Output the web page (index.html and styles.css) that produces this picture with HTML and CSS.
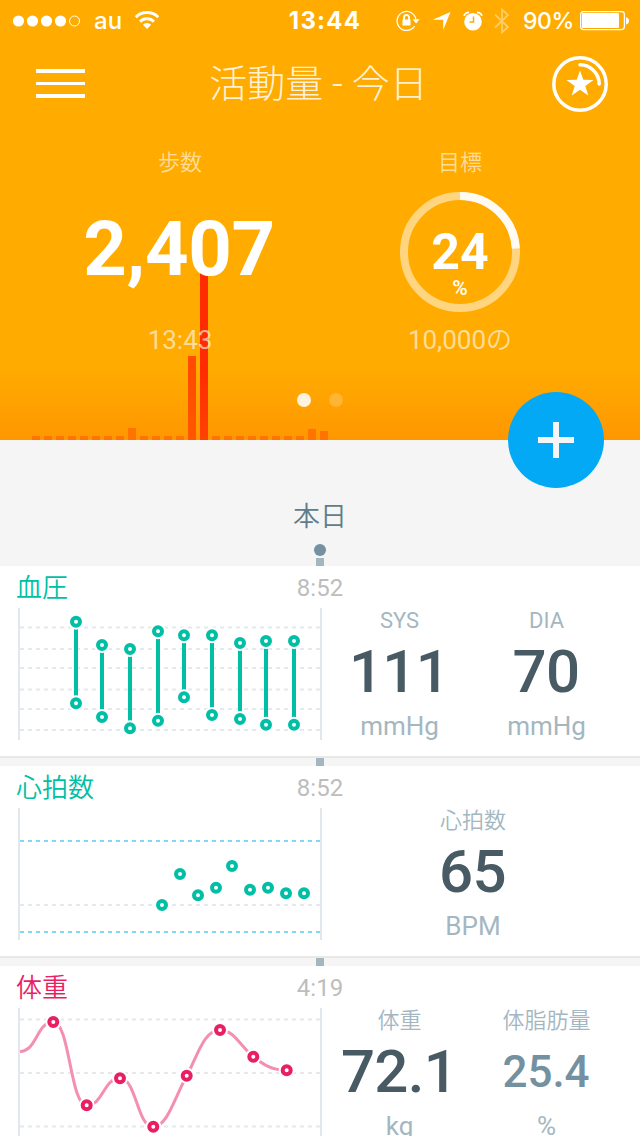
FILE: index.html
```html
<!DOCTYPE html>
<html lang="ja">
<head>
    <meta charset="UTF-8">
    <meta name="viewport" content="width=device-width, initial-scale=1.0">
    <title>活動量</title>
    <link rel="stylesheet" href="styles.css">
</head>
<body>
    <div class="hero">
        <div class="steps-chart" id="stepsChart"></div>
        <div class="hero-shade"></div>

        <div class="status-bar">
            <div class="status-left">
                <svg class="signal" width="70" height="12" viewBox="0 0 70 12">
                    <circle cx="6.500" cy="6" r="5.6" />
                    <circle cx="20.500" cy="6" r="5.6" />
                    <circle cx="34.500" cy="6" r="5.6" />
                    <circle cx="48.500" cy="6" r="5.6" />
                    <circle class="empty" cx="62.500" cy="6" r="5" />
                </svg>
                <span class="carrier">au</span>
                <svg class="wifi" width="26" height="20" viewBox="0 0 26 20">
                    <path class="arc" d="M1.800 6.200a15.800 15.800 0 0 1 22.400 0M6 10.600a9.800 9.800 0 0 1 14 0" />
                    <path d="M13 18l-4.200-4.200a6 6 0 0 1 8.400 0z" />
                </svg>
            </div>
            <span class="clock">13:44</span>
            <div class="status-right">
                <svg width="24" height="22" viewBox="0 0 24 22">
                    <path class="thin" d="M18.500 16.200A9.500 9.500 0 1 1 20 9.800" />
                    <path class="solid" d="M16.600 9.300h7l-3.500 4.200zM6.500 9.500h8v6h-8z" />
                    <path class="lock" d="M8 10V7.500a2.500 2.500 0 0 1 5 0V10" />
                </svg>
                <svg class="location" width="19" height="20" viewBox="0 0 19 20">
                    <path class="solid" d="M18.500 1L11.200 19V8.800H.5z" />
                </svg>
                <svg class="alarm" width="20" height="20" viewBox="0 0 20 20">
                    <circle class="solid" cx="10" cy="10.800" r="8.800" />
                    <path class="bell" d="M1 4.800Q2 1.500 6 1.300M19 4.800Q18 1.500 14 1.300" />
                    <path class="hands" d="M10.500 5.500v5.500H6.500" />
                </svg>
                <svg class="bluetooth" width="16" height="28" viewBox="0 0 16 28">
                    <path d="M1 7.500L14 20 8 25.500V2.500L14 8 1 20.500" />
                </svg>
                <span class="percent">90%</span>
                <svg class="battery" width="49" height="20" viewBox="0 0 49 20">
                    <rect class="case" x=".6" y=".6" width="43.800" height="18" rx="3" />
                    <rect class="solid" x="2" y="2" width="37" height="15" rx="1" />
                    <path class="solid" d="M46 6.200q3 .6 3 3.600t-3 3.600z" />
                </svg>
            </div>
        </div>

        <div class="nav">
            <div class="menu">
                <span></span>
                <span></span>
                <span></span>
            </div>
            <h1>活動量 - 今日</h1>
            <svg class="badge" width="56" height="56" viewBox="0 0 56 56">
                <circle cx="28" cy="28" r="26.200" />
                <path class="arc" d="M28 8.800A19.200 19.200 0 0 1 47.200 28" />
                <path class="star" d="M28 14.500l3.300 9.300 10.200.1-8.200 6.100 3 9.500-8.300-5.700-8.300 5.700 3-9.500-8.200-6.100 10.200-.1z" />
            </svg>
        </div>

        <div class="stats">
            <div class="stat">
                <div class="stat-label">歩数</div>
                <div class="stat-value">2,407</div>
                <div class="stat-note">13:43</div>
            </div>
            <div class="stat">
                <div class="stat-label">目標</div>
                <div class="goal">
                    <svg width="120" height="120" viewBox="0 0 120 120">
                        <circle class="track" cx="60" cy="60" r="56" />
                        <circle class="progress" cx="60" cy="60" r="56" pathLength="100" transform="rotate(-90 60 60)" />
                    </svg>
                    <div class="goal-text">
                        <span class="goal-number">24</span>
                        <span class="goal-unit">%</span>
                    </div>
                </div>
                <div class="stat-note">10,000<span>の</span></div>
            </div>
        </div>

        <div class="dots">
            <span class="active"></span>
            <span></span>
        </div>

        <div class="add-btn">
            <svg width="36" height="36" viewBox="0 0 36 36">
                <path d="M18 0v36M0 18h36" />
            </svg>
        </div>
    </div>

    <div class="day">
        <h2>本日</h2>
        <span class="day-dot"></span>
        <span class="link"></span>
    </div>

    <div class="card">
        <div class="card-header">
            <span class="card-title">血圧</span>
            <span class="time">8:52</span>
        </div>
        <div class="card-body">
            <svg class="chart" id="pressureChart" width="304" height="132" viewBox="0 0 304 132"></svg>
            <div class="readings">
                <div class="reading">
                    <span class="label latin">SYS</span>
                    <span class="value">111</span>
                    <span class="unit">mmHg</span>
                </div>
                <div class="reading">
                    <span class="label latin">DIA</span>
                    <span class="value">70</span>
                    <span class="unit">mmHg</span>
                </div>
            </div>
        </div>
    </div>
    <span class="link"></span>

    <div class="card">
        <div class="card-header">
            <span class="card-title">心拍数</span>
            <span class="time">8:52</span>
        </div>
        <div class="card-body">
            <svg class="chart" id="heartChart" width="304" height="132" viewBox="0 0 304 132"></svg>
            <div class="readings">
                <div class="reading">
                    <span class="label">心拍数</span>
                    <span class="value">65</span>
                    <span class="unit">BPM</span>
                </div>
            </div>
        </div>
    </div>
    <span class="link"></span>

    <div class="card weight">
        <div class="card-header">
            <span class="card-title">体重</span>
            <span class="time">4:19</span>
        </div>
        <div class="card-body">
            <svg class="chart" id="weightChart" width="304" height="132" viewBox="0 0 304 132"></svg>
            <div class="readings">
                <div class="reading">
                    <span class="label">体重</span>
                    <span class="value">72.1</span>
                    <span class="unit">kg</span>
                </div>
                <div class="reading">
                    <span class="label">体脂肪量</span>
                    <span class="value small">25.4</span>
                    <span class="unit">%</span>
                </div>
            </div>
        </div>
    </div>

    <script>
        // bar heights, one per half hour
        const steps = [4, 4, 4, 4, 4, 4, 4, 4, 12, 4, 4, 4, 4, 84, 168, 4, 4, 4, 4, 4, 4, 4, 4, 11, 9];

        // x, systolic, diastolic
        const pressure = [
            [58, 13.7, 95.3], [84, 37, 109], [112, 41, 120.3],
            [140, 23.3, 112.7], [166, 27.3, 89.3], [194, 27.3, 107],
            [222, 35, 111], [248, 33, 116.7], [276, 33, 116.7]
        ];

        const heart = [
            [144, 97], [162, 66], [180, 87.3], [198, 79.7], [214, 58],
            [232, 81.7], [250, 79.7], [268, 85.3], [286, 85.3]
        ];

        const weight = [
            [35.3, 14], [68.7, 97.3], [102, 70.3], [135.3, 118.7],
            [168.7, 67.7], [202, 22], [235.3, 48.7], [268.7, 62.3]
        ];

        function grid(lines, className) {
            return lines.map(y => `<path class="${className}" d="M2 ${y}H302" />`).join('');
        }

        function marker(x, y) {
            return `<circle class="halo" cx="${x}" cy="${y}" r="8" />
                    <circle class="marker" cx="${x}" cy="${y}" r="4" />`;
        }

        function drawChart(id, content) {
            const axes = '<path class="axis" d="M1 0V132M303 0V132" />';
            document.getElementById(id).innerHTML = content + axes;
        }

        document.getElementById('stepsChart').innerHTML = steps.map(height => {
            const level = height > 100 ? 'high' : height > 50 ? 'medium' : '';
            return `<span class="${level}" style="height: ${height}px"></span>`;
        }).join('');

        drawChart('pressureChart',
            grid([19.5, 41, 60, 81.5, 101, 122], 'grid') +
            pressure.map(([x, sys, dia]) => `<path class="range" d="M${x} ${sys}V${dia}" />` + marker(x, sys) + marker(x, dia)).join(''));

        drawChart('heartChart',
            grid([97], 'grid') + grid([33, 124], 'limit') +
            heart.map(([x, y]) => marker(x, y)).join(''));

        drawChart('weightChart',
            grid([11.5, 65, 118.5], 'grid') +
            `<path class="curve" d="M2 43.5C18.700 43.500 18.700 14 35.300 14S52 97.300 68.700 97.300
                S85.300 70.300 102 70.300 118.700 118.700 135.300 118.700C149 118.700 156 91 168.700 67.700
                C180 47 186 22 202 22C216 22 222 38 235.300 48.700C246 57 254 62.300 268.700 62.300" />` +
            weight.map(([x, y]) => marker(x, y)).join(''));
    </script>
</body>
</html>
```
FILE: styles.css
```css
* {
    box-sizing: border-box;
}

body {
    width: 640px;
    height: 1136px;
    margin: 0;
    overflow: hidden;
    background-color: #f5f5f5;
    font-family: Roboto, "Noto Sans CJK JP", sans-serif;
    color: #485a63;
}

svg {
    display: block;
    flex: none;
}

/* Header */
.hero {
    position: relative;
    height: 440px;
    background-color: #ffab00;
    color: #fff;
}

.steps-chart {
    position: absolute;
    left: 32px;
    bottom: 0;
    display: flex;
    align-items: flex-end;
    gap: 4px;
}

.steps-chart span {
    width: 8px;
    background-color: #ff7600;
}

.steps-chart .medium {
    background-color: #ff4c00;
}

.steps-chart .high {
    background-color: #ff2c00;
}

.hero-shade {
    position: absolute;
    left: 0;
    right: 0;
    bottom: 0;
    height: 70px;
    background: linear-gradient(rgba(255, 111, 0, 0), rgba(255, 111, 0, 0.33));
}

.status-bar {
    position: relative;
    display: grid;
    grid-template-columns: 1fr auto 1fr;
    align-items: center;
    height: 40px;
    padding: 2px 11px 0 12px;
    font-family: Inter, "Liberation Sans", sans-serif;
    font-size: 24px;
    line-height: 38px;
}

.status-left,
.status-right {
    display: flex;
    align-items: center;
}

.status-right {
    justify-content: flex-end;
}

.signal,
.wifi,
.solid {
    fill: #fff;
}

.signal .empty {
    fill: none;
    stroke: #fff;
}

.carrier {
    margin-left: 12px;
    font-weight: 500;
}

.wifi {
    margin-left: 12px;
}

.wifi .arc {
    fill: none;
    stroke: #fff;
    stroke-width: 3;
}

.clock {
    padding-left: 9px;
    font-weight: 700;
    letter-spacing: 1.2px;
}

.thin,
.lock,
.bell,
.case {
    fill: none;
    stroke: #fff;
    stroke-width: 1.3;
}

.lock,
.bell {
    stroke-width: 1.8;
}

.location,
.alarm {
    margin-left: 12px;
}

.hands {
    fill: none;
    stroke: #ffab00;
    stroke-width: 1.5;
}

.bluetooth {
    margin-left: 11px;
    fill: none;
    stroke: rgba(255, 255, 255, 0.4);
    stroke-width: 1.8;
}

.percent {
    margin: 0 6px 0 13px;
    font-size: 23px;
    font-weight: 500;
    letter-spacing: -0.4px;
}

.nav {
    position: relative;
    display: flex;
    align-items: center;
    justify-content: space-between;
    height: 88px;
    padding: 0 32px 1px 36px;
}

.menu {
    display: flex;
    flex-direction: column;
    gap: 9px;
    width: 49px;
}

.menu span {
    height: 3.4px;
    background-color: #fff;
}

.nav h1 {
    margin: 0;
    font-size: 38px;
    font-weight: 300;
    line-height: 56px;
    word-spacing: -0.5px;
    color: rgba(255, 255, 255, 0.85);
}

.badge {
    fill: none;
    stroke: #fff;
    stroke-width: 3.5;
}

.badge .arc {
    stroke-linecap: round;
}

.badge .star {
    fill: #fff;
    stroke: none;
}

.stats {
    position: relative;
    display: grid;
    grid-template-columns: 280px 280px;
    padding: 18px 40px 0;
    text-align: center;
}

.stat-label {
    height: 46px;
    font-size: 22px;
    font-weight: 350;
    line-height: 34px;
    color: rgba(255, 255, 255, 0.6);
}

.stat-value {
    height: 120px;
    padding-right: 2px;
    font-size: 76px;
    font-weight: 700;
    line-height: 114px;
    letter-spacing: -0.3px;
}

.stat-note {
    margin-top: 12px;
    font-size: 26px;
    line-height: 32px;
    color: rgba(255, 255, 255, 0.6);
}

.stat-note span {
    font-weight: 350;
}

.goal {
    display: grid;
    justify-content: center;
}

.goal svg,
.goal-text {
    grid-area: 1 / 1;
}

.track,
.progress {
    fill: none;
    stroke: rgba(255, 255, 255, 0.5);
    stroke-width: 8;
}

.progress {
    stroke: #fffaf2;
    stroke-dasharray: 24 76;
}

.goal-text {
    display: flex;
    flex-direction: column;
    padding-top: 32px;
}

.goal-number {
    font-size: 50px;
    font-weight: 700;
    line-height: 56px;
}

.goal-unit {
    font-size: 21px;
    font-weight: 500;
    line-height: 17px;
}

.dots {
    position: absolute;
    left: 0;
    right: 0;
    bottom: 33px;
    display: flex;
    justify-content: center;
    gap: 18px;
}

.dots span {
    width: 14px;
    height: 14px;
    border-radius: 50%;
    background-color: rgba(255, 255, 255, 0.2);
}

.dots .active {
    background-color: rgba(255, 255, 255, 0.87);
}

.add-btn {
    position: absolute;
    right: 36px;
    bottom: -48px;
    display: flex;
    align-items: center;
    justify-content: center;
    width: 96px;
    height: 96px;
    border-radius: 50%;
    background-color: #03a9f4;
}

.add-btn path {
    stroke: #f5f5f5;
    stroke-width: 6;
}

/* Timeline */
.day {
    display: flex;
    flex-direction: column;
    align-items: center;
    height: 126px;
    padding-top: 57px;
}

.day h2 {
    margin: 0;
    font-size: 27px;
    font-weight: 350;
    line-height: 40px;
    color: #607d8b;
}

.day-dot {
    width: 12px;
    height: 12px;
    margin: 7px 0 2px;
    border-radius: 50%;
    background-color: #7391a0;
}

.link {
    display: block;
    width: 8px;
    height: 8px;
    margin: 0 auto;
    background-color: #a4b7c1;
}

.card {
    height: 192px;
    border-bottom: 2px solid #e8e8e8;
    background-color: #fff;
}

.card-header {
    display: grid;
    grid-template-columns: 1fr auto 1fr;
    align-items: center;
    height: 42px;
    padding: 2px 16px 0;
}

.card-title {
    font-size: 26px;
    font-weight: 350;
    line-height: 40px;
    color: #00bfa5;
}

.time {
    font-size: 24px;
    line-height: 40px;
    color: #bdbdbd;
}

.card-body {
    display: flex;
    padding: 0 20px 0 18px;
}

/* Charts */
.chart {
    fill: none;
    color: #00bfa5;
}

.axis {
    stroke: #e1e7ea;
    stroke-width: 2;
}

.grid,
.limit {
    stroke: #e4e9eb;
    stroke-width: 2;
    stroke-dasharray: 4;
}

.limit {
    stroke: #81d4fa;
}

.range {
    stroke: currentColor;
    stroke-width: 4;
}

.halo {
    fill: #fff;
}

.marker {
    stroke: currentColor;
    stroke-width: 4;
}

.curve {
    stroke: #f48fb1;
    stroke-width: 3;
}

.weight .card-title,
.weight .chart {
    color: #e91e63;
}

/* Readings */
.readings {
    display: flex;
    flex: 1;
    padding-left: 4px;
}

.reading {
    display: flex;
    flex: 1;
    flex-direction: column;
    align-items: center;
    color: #a4b7c1;
}

.label {
    height: 24px;
    font-size: 22px;
    font-weight: 350;
    line-height: 26px;
}

.label.latin {
    font-weight: 400;
}

.value {
    margin-top: 10px;
    padding-right: 1px;
    font-size: 60px;
    font-weight: 500;
    line-height: 60px;
    letter-spacing: -0.7px;
    color: #485a63;
}

.value.small {
    font-size: 44px;
    letter-spacing: 0;
    color: #7391a0;
}

.unit {
    margin-top: 9px;
    font-size: 26px;
    line-height: 30px;
}
```
